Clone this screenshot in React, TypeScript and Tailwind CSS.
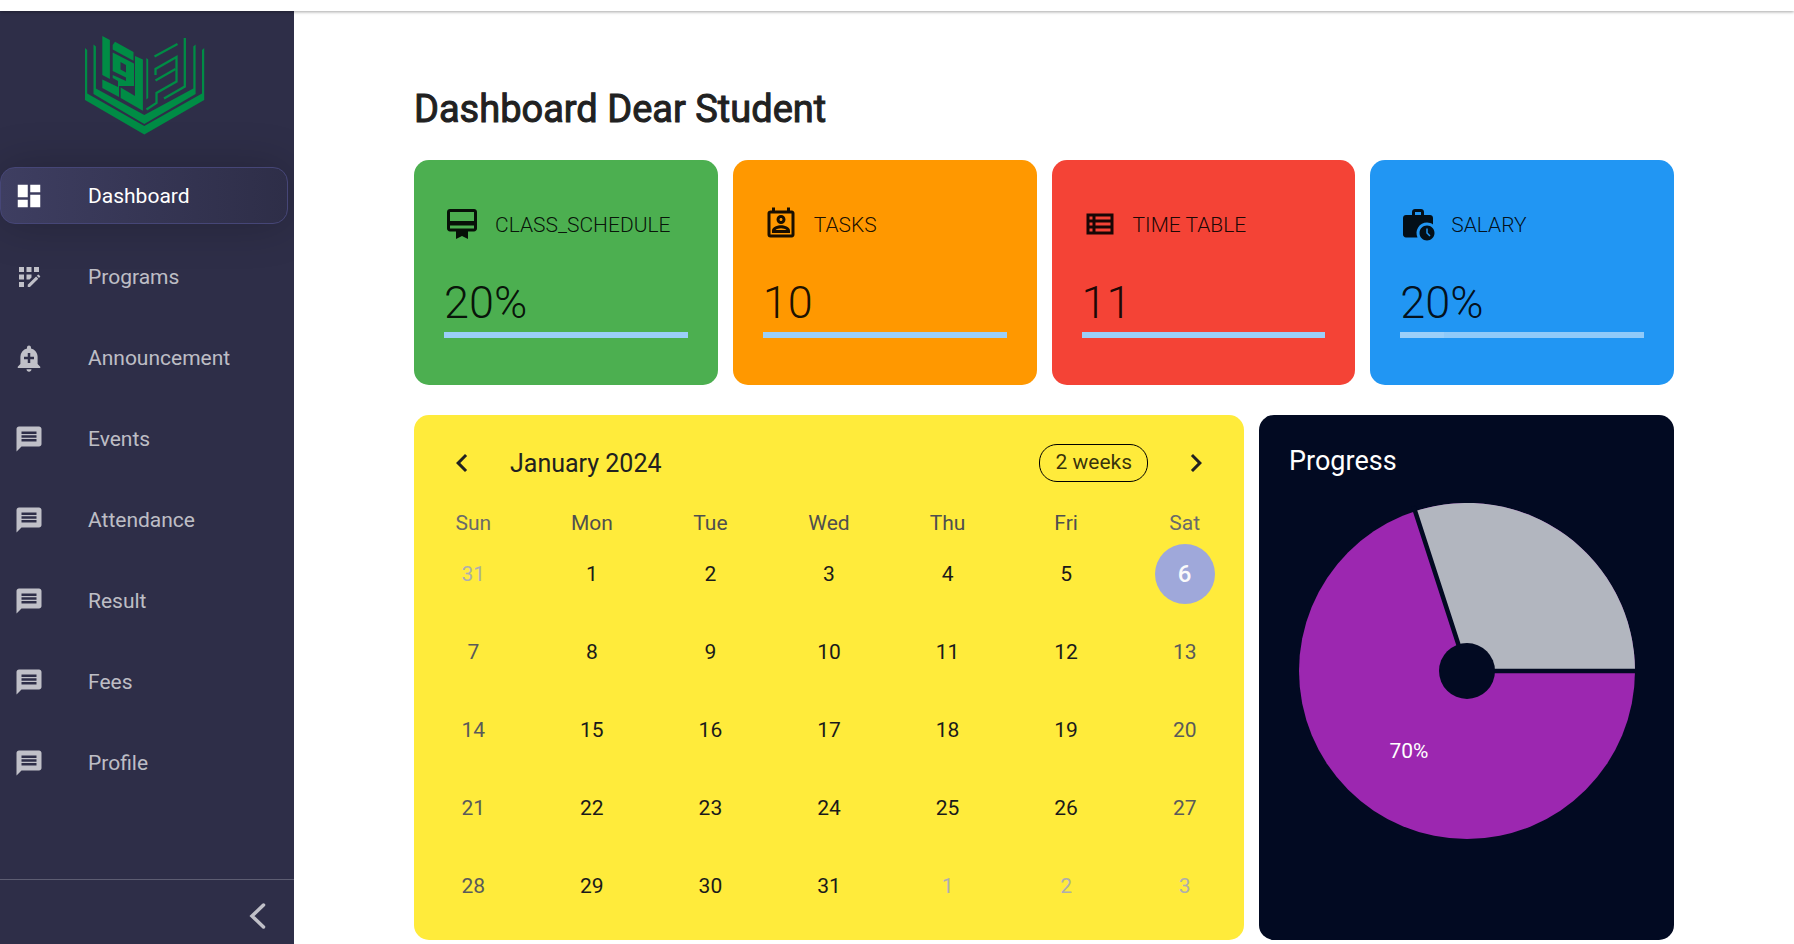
import { useState } from "react";
import {
  MdAddAlert,
  MdAppRegistration,
  MdChevronLeft,
  MdChevronRight,
  MdDashboard,
  MdMessage,
  MdOutlineCardMembership,
  MdOutlinePermContactCalendar,
  MdOutlineViewList,
  MdWorkHistory,
} from "react-icons/md";

const navItems = [
  { label: "Dashboard", Icon: MdDashboard },
  { label: "Programs", Icon: MdAppRegistration },
  { label: "Announcement", Icon: MdAddAlert },
  { label: "Events", Icon: MdMessage },
  { label: "Attendance", Icon: MdMessage },
  { label: "Result", Icon: MdMessage },
  { label: "Fees", Icon: MdMessage },
  { label: "Profile", Icon: MdMessage },
];

const stats = [
  { label: "CLASS_SCHEDULE", value: "20%", Icon: MdOutlineCardMembership, card: "bg-[#4caf50]", fill: 100 },
  { label: "TASKS", value: "10", Icon: MdOutlinePermContactCalendar, card: "bg-[#ff9800]", fill: 100 },
  { label: "TIME TABLE", value: "11", Icon: MdOutlineViewList, card: "bg-[#f44336]", fill: 100 },
  { label: "SALARY", value: "20%", Icon: MdWorkHistory, card: "bg-[#2196f3]", fill: 18 },
];

const weekdays = ["Sun", "Mon", "Tue", "Wed", "Thu", "Fri", "Sat"];
const weeks = [0, 1, 2, 3, 4].map((week) => weekdays.map((_, day) => week * 7 + day));

function Logo() {
  return (
    <svg viewBox="0 0 120 100" className="h-[100px] w-[120px]" fill="#008c45" aria-label="School logo" role="img">
      <path d="M0 13L2.200 15V58.500L59.300 91L117 58.500V15L119.200 13V65L59.300 99.500L0 65Z" />
      <path d="M8.500 9.500L10.900 11.500V53.500L59.300 80L108.300 53.500V11.500L110.600 9.500V59L59.300 89L8.500 59Z" />
      <path d="M17.300 1L24.900 5V44L17.300 40Z" />
      <path d="M30 6.700L48.500 17V25.700L27.700 14.500V10Z" />
      <path fillRule="evenodd" d="M27.700 17.500L49 28.500V51L34 51V62L17.300 53V44.500L33 52V46L27.700 43ZM35.500 27V34.500L41 37.500V30ZM27.700 36L41 42.500V46L27.700 40Z" />
      <path d="M50 21L57.900 24.500V75.700L35.700 63V52.500L50 61Z" />
      <path d="M61.300 23L63.200 24.500V63L61.300 64.500Z" />
      <g fill="none" stroke="#008c45" strokeWidth="2.300">
        <path d="M69.500 21.500L92.500 9" />
        <path d="M70.500 40V34L91.500 22V46.500L71.500 58V68L61.500 74.500" />
        <path d="M90.500 34L70.500 45.500" />
        <path d="M79 63.500L99.800 51.500V3" />
      </g>
    </svg>
  );
}

function Sidebar() {
  const [active, setActive] = useState("Dashboard");
  return (
    <aside className="flex w-[294px] shrink-0 flex-col overflow-hidden bg-[#2e2e48]">
      <div className="flex justify-center pt-6 pr-1">
        <Logo />
      </div>
      <nav className="mt-8 flex flex-1 flex-col gap-6 pr-1.5">
        {navItems.map(({ label, Icon }) => (
          <a
            key={label}
            href={"#" + label.toLowerCase()}
            onClick={() => setActive(label)}
            className={
              "flex h-[57px] items-center gap-11 rounded-[15px] border pl-[13px] text-[21px] " +
              (active === label
                ? "border-[#464677] bg-linear-to-r from-[#3e3e61] to-[#2e2e48] text-white shadow-[0_0_45px_rgba(0,0,0,0.22)]"
                : "border-transparent text-white/70")
            }
          >
            <Icon className="size-[30px]" />
            <span className="pt-0.5">{label}</span>
          </a>
        ))}
      </nav>
      <div className="flex h-[65px] items-center justify-end border-t border-[#5d5d72] pt-2 pr-5">
        <button type="button" aria-label="Collapse sidebar" className="text-white/70">
          <svg viewBox="0 0 30 30" className="size-[30px]" fill="none" stroke="currentColor" strokeWidth="3.500" strokeLinecap="round">
            <path d="M19.500 4L8 15L19.500 26" />
          </svg>
        </button>
      </div>
    </aside>
  );
}

function StatCard({ label, value, Icon, card, fill }: (typeof stats)[number]) {
  return (
    <section className={"flex h-[225px] flex-col rounded-[15px] px-[30px] pt-[46px] text-black/90 " + card}>
      <div className="flex items-center gap-[15px]">
        <Icon className="size-9" />
        <h2 className="pt-1 text-[21px] font-light">{label}</h2>
      </div>
      <p className="mt-[35px] text-[45px] leading-[52px] font-light">{value}</p>
      <div className="mt-[3px] h-1.5 bg-[#90caf9]">
        <div className="h-full bg-[#9bcff9]" style={{ width: fill + "%" }} />
      </div>
    </section>
  );
}

function Calendar() {
  return (
    <section className="rounded-[15px] bg-[#ffeb3b] pt-[18px] pb-[15px] text-[21px]">
      <header className="flex h-[60px] items-center px-[30px]">
        <button type="button" aria-label="Previous month">
          <MdChevronLeft className="size-9" />
        </button>
        <h2 className="ml-[30px] flex-1 pt-0.5 text-[25px]">January 2024</h2>
        <button type="button" className="h-[38px] rounded-[18px] border border-black px-[15px] text-black/80">
          2 weeks
        </button>
        <button type="button" aria-label="Next month" className="ml-[30px]">
          <MdChevronRight className="size-9" />
        </button>
      </header>
      <table className="w-full table-fixed text-center">
        <thead>
          <tr className="h-[42px]">
            {weekdays.map((day, i) => (
              <th
                key={day}
                className={"p-0 pt-[18px] leading-6 font-normal " + (i % 6 === 0 ? "text-[#6a6a6a]" : "text-[#4f4f4f]")}
              >
                {day}
              </th>
            ))}
          </tr>
        </thead>
        <tbody>
          {weeks.map((days) => (
            <tr key={days[0]} className="h-[78px]">
              {days.map((day, i) => {
                const outside = day < 1 || day > 31;
                const shown = day < 1 ? 31 : day > 31 ? day - 31 : day;
                const tone = outside ? "text-[#aeaeae]" : i % 6 === 0 ? "text-[#5a5a5a]" : "text-[#1a1a1a]";
                return day === 6 ? (
                  <td key={day} className="p-0">
                    <span className="mx-auto flex size-[60px] items-center justify-center rounded-full bg-[#9fa8da] text-2xl font-medium text-[#fafafa]">
                      6
                    </span>
                  </td>
                ) : (
                  <td key={day} className={"p-0 pt-0.5 " + tone}>
                    {shown}
                  </td>
                );
              })}
            </tr>
          ))}
        </tbody>
      </table>
    </section>
  );
}

function Progress() {
  return (
    <section className="rounded-[15px] bg-[#020a22] px-[30px] pt-[30px] text-white">
      <h2 className="text-[27px] leading-8">Progress</h2>
      <svg viewBox="-168 -168 336 336" className="mx-auto mt-[26px] w-[336px] max-w-full" role="img" aria-label="Progress 70%">
        <circle r="168" fill="#9c27b0" />
        <path d="M0 0L168 0A168 168 0 0 0 -51.900 -159.800Z" fill="#b2b6bf" />
        <path d="M-53.500 -164.800L0 0H170" fill="none" stroke="#020a22" strokeWidth="4.500" />
        <circle r="28" fill="#020a22" />
        <text x="-58" y="87" textAnchor="middle" fontSize="21" fill="#fff">
          70%
        </text>
      </svg>
    </section>
  );
}

export default function App() {
  return (
    <div className="flex min-h-screen flex-col bg-white font-[Roboto,sans-serif] text-[#212121]">
      <div className="relative h-[11px] shrink-0 bg-white shadow-[0_1px_3px_rgba(0,0,0,0.35)]" />
      <div className="flex flex-1">
        <Sidebar />
        <main className="flex-1 px-[120px] pt-[75px] pb-1">
          <h1 className="text-[38px] leading-[46px] font-normal [-webkit-text-stroke:1px]">Dashboard Dear Student</h1>
          <div className="mt-7 grid grid-cols-4 gap-[15px]">
            {stats.map((stat) => (
              <StatCard key={stat.label} {...stat} />
            ))}
          </div>
          <div className="mt-[30px] grid grid-cols-[2fr_1fr] gap-[15px]">
            <Calendar />
            <Progress />
          </div>
        </main>
      </div>
    </div>
  );
}
